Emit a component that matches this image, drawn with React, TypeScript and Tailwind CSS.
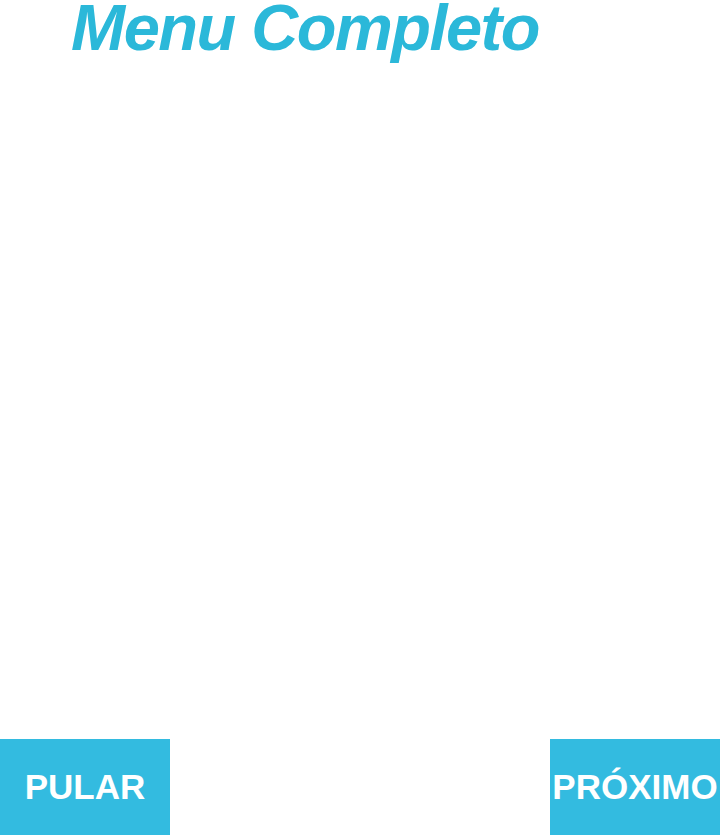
export default function App() {
  return (
    <div className="flex h-[835px] w-[720px] flex-col justify-between bg-white font-['Liberation_Sans',Arial,sans-serif]">
      <h1 className="-mt-[9px] pl-[71px] text-[65px] font-bold italic leading-[74px] tracking-[-1.5px] text-[#2bb8d9]">
        Menu Completo
      </h1>
      <div className="flex justify-between">
        <button className="flex h-[96px] w-[170px] items-center justify-center bg-[#33bbe0] text-[35px] font-bold text-white">
          PULAR
        </button>
        <button className="flex h-[96px] w-[170px] items-center justify-center bg-[#33bbe0] text-[35px] font-bold text-white">
          PRÓXIMO
        </button>
      </div>
    </div>
  )
}
